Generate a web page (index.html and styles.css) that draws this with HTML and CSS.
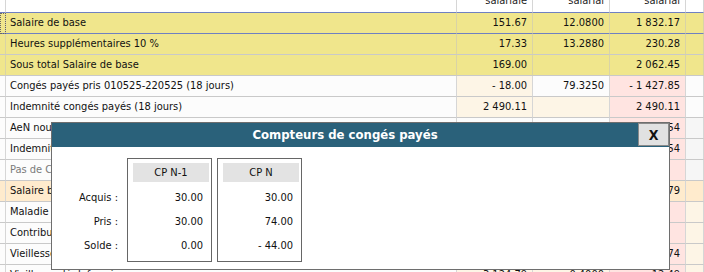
FILE: index.html
```html
<!DOCTYPE html>
<html lang="fr">
<head>
    <meta charset="utf-8">
    <link rel="stylesheet" href="styles.css">
</head>
<body>
    <div class="sheet">
        <table class="grid">
            <colgroup>
                <col class="c-sel">
                <col class="c-label">
                <col class="c-base">
                <col class="c-rate">
                <col class="c-amount">
                <col class="c-end">
            </colgroup>
            <thead>
                <tr>
                    <th class="sel"></th>
                    <th class="label"></th>
                    <th>Base<br>salariale</th>
                    <th>Taux<br>salarial</th>
                    <th>Montant<br>salarial</th>
                    <th></th>
                </tr>
            </thead>
            <tbody>
                <tr class="base current">
                    <td class="sel"></td>
                    <td class="label">Salaire de base</td>
                    <td class="num">151.67</td>
                    <td class="num">12.0800</td>
                    <td class="num">1 832.17</td>
                    <td></td>
                </tr>
                <tr class="base">
                    <td class="sel"></td>
                    <td class="label">Heures supplémentaires 10 %</td>
                    <td class="num">17.33</td>
                    <td class="num">13.2880</td>
                    <td class="num">230.28</td>
                    <td></td>
                </tr>
                <tr class="base">
                    <td class="sel"></td>
                    <td class="label">Sous total Salaire de base</td>
                    <td class="num">169.00</td>
                    <td class="num"></td>
                    <td class="num">2 062.45</td>
                    <td></td>
                </tr>
                <tr>
                    <td class="sel"></td>
                    <td class="label">Congés payés pris 010525-220525 (18 jours)</td>
                    <td class="num cream">- 18.00</td>
                    <td class="num">79.3250</td>
                    <td class="num pink">- 1 427.85</td>
                    <td></td>
                </tr>
                <tr>
                    <td class="sel"></td>
                    <td class="label">Indemnité congés payés (18 jours)</td>
                    <td class="num cream">2 490.11</td>
                    <td class="num cream"></td>
                    <td class="num pink">2 490.11</td>
                    <td></td>
                </tr>
                <tr>
                    <td class="sel"></td>
                    <td class="label">AeN nouvelle</td>
                    <td class="num"></td>
                    <td class="num"></td>
                    <td class="num pink">62.54</td>
                    <td class="grey"></td>
                </tr>
                <tr>
                    <td class="sel"></td>
                    <td class="label">Indemnité</td>
                    <td class="num"></td>
                    <td class="num"></td>
                    <td class="num pink">- 62.54</td>
                    <td class="grey"></td>
                </tr>
                <tr class="muted">
                    <td class="sel"></td>
                    <td class="label">Pas de CSG</td>
                    <td class="num"></td>
                    <td class="num"></td>
                    <td class="num pink"></td>
                    <td class="grey"></td>
                </tr>
                <tr class="gross">
                    <td class="sel"></td>
                    <td class="label">Salaire brut</td>
                    <td class="num"></td>
                    <td class="num"></td>
                    <td class="num">3 124.79</td>
                    <td></td>
                </tr>
                <tr>
                    <td class="sel"></td>
                    <td class="label">Maladie</td>
                    <td class="num"></td>
                    <td class="num"></td>
                    <td class="num pink"></td>
                    <td class="cream"></td>
                </tr>
                <tr>
                    <td class="sel"></td>
                    <td class="label">Contribution</td>
                    <td class="num"></td>
                    <td class="num"></td>
                    <td class="num pink"></td>
                    <td class="cream"></td>
                </tr>
                <tr>
                    <td class="sel"></td>
                    <td class="label">Vieillesse</td>
                    <td class="num"></td>
                    <td class="num"></td>
                    <td class="num pink">215.74</td>
                    <td class="cream"></td>
                </tr>
                <tr>
                    <td class="sel"></td>
                    <td class="label">Vieillesse déplafonnée</td>
                    <td class="num cream">3 124.79</td>
                    <td class="num cream">0.4000</td>
                    <td class="num pink">12.49</td>
                    <td class="cream"></td>
                </tr>
            </tbody>
        </table>
    </div>

    <div class="dialog">
        <div class="dialog-head">
            <span class="dialog-title">Compteurs de congés payés</span>
            <button class="close">X</button>
        </div>
        <div class="dialog-body">
            <div class="labels">
                <div class="line">Acquis :</div>
                <div class="line">Pris :</div>
                <div class="line">Solde :</div>
            </div>
            <div class="counter">
                <div class="counter-head">CP N-1</div>
                <div class="line">30.00</div>
                <div class="line">30.00</div>
                <div class="line">0.00</div>
            </div>
            <div class="counter">
                <div class="counter-head">CP N</div>
                <div class="line">30.00</div>
                <div class="line">74.00</div>
                <div class="line">- 44.00</div>
            </div>
        </div>
    </div>
</body>
</html>
```

FILE: styles.css
```css
* {
    box-sizing: border-box;
}

html,
body {
    margin: 0;
    overflow: hidden;
}

body {
    position: relative;
    width: 704px;
    height: 272px;
    font-family: "DejaVu Sans Condensed", "Liberation Sans", Arial, sans-serif;
    font-size: 11px;
    color: #111111;
    background-color: #ffffff;
}

/* payslip grid, scrolled a little */
.sheet {
    height: 272px;
    overflow: hidden;
}

.grid {
    table-layout: fixed;
    width: 704px;
    border-collapse: separate;
    border-spacing: 0;
    margin-top: -23px;
}

.c-sel { width: 6px; }
.c-label { width: 451px; }
.c-base { width: 76px; }
.c-rate { width: 77px; }
.c-amount { width: 76px; }
.c-end { width: 18px; }

.grid th,
.grid td {
    padding: 0 5px;
    line-height: 20px;
    white-space: nowrap;
    overflow: hidden;
    border-right: 1px solid #d6d6d6;
    border-bottom: 1px solid #c9c9c9;
    background-color: #fcfcfc;
}

.grid th {
    font-weight: normal;
    line-height: 13px;
    padding: 4px 5px 5px;
    text-align: right;
    color: #222222;
    background-color: #ffffff;
    border-bottom-color: #6f80c2;
}

.grid .sel {
    padding: 0;
}

.grid .label {
    padding-left: 4px;
}

.grid .num {
    text-align: right;
}

.grid tr.base td {
    background-color: #f0e68c;
    border-right-color: #d9d3a6;
}

.grid tr.current td {
    border-bottom-color: #6f80c2;
}

.grid tr.current .sel {
    outline: 1px dotted #666666;
    outline-offset: -1px;
}

.grid tr.gross td {
    background-color: #ffebcd;
}

.grid tr.muted .label {
    color: #7a7a7a;
}

.grid td.cream {
    background-color: #fdf5e6;
}

.grid td.pink {
    background-color: #ffe4e1;
}

.grid td.grey {
    background-color: #f6f6f6;
}

/* leave counters popup */
.dialog {
    position: absolute;
    left: 51px;
    top: 122px;
    width: 619px;
    height: 148px;
    border: 1px solid #6e6e6e;
    background-color: #ffffff;
    display: flex;
    flex-direction: column;
}

.dialog-head {
    display: flex;
    align-items: flex-start;
    height: 24px;
    background-color: #2a617a;
}

.dialog-title {
    flex: 1;
    text-align: center;
    line-height: 24px;
    font-size: 13px;
    font-weight: bold;
    color: #ffffff;
}

.close {
    width: 31px;
    height: 23px;
    margin: 0;
    padding: 0;
    border: 1px solid #8a8a8a;
    background-color: #e1e1e1;
    font-family: "DejaVu Sans Condensed", "Liberation Sans", Arial, sans-serif;
    font-size: 14px;
    font-weight: bold;
    color: #111111;
}

.dialog-body {
    display: flex;
    align-items: flex-start;
    gap: 5px;
    padding-top: 11px;
}

.labels {
    width: 66px;
    margin-right: 4px;
    padding-top: 28px;
    text-align: right;
}

.line {
    height: 24px;
    line-height: 24px;
}

.counter {
    width: 85px;
    padding: 4px 2px 3px 5px;
    border: 1px solid #666666;
}

.counter-head {
    height: 19px;
    line-height: 19px;
    margin-bottom: 4px;
    text-align: center;
    background-color: #e3e3e3;
}

.counter .line {
    text-align: right;
    padding-right: 6px;
}
```
